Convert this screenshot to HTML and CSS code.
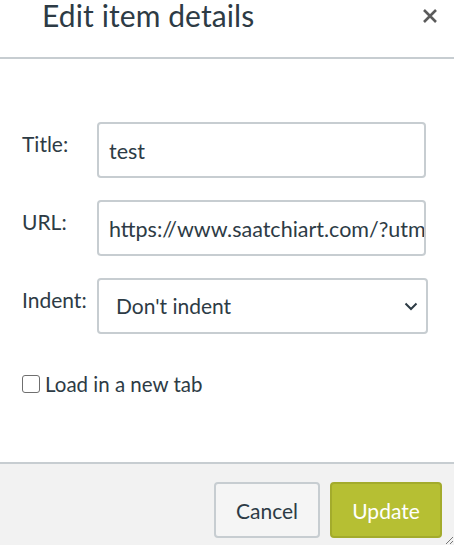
FILE: index.html
```html
<!DOCTYPE html>
<html>
<head>
<meta charset="utf-8">
<link rel="stylesheet" href="styles.css">
</head>
<body>
<div class="dialog">
  <div class="header">
    <h1 class="title">Edit item details</h1>
    <button class="close" aria-label="Close">
      <svg width="16" height="16" viewBox="0 0 16 16"><path d="M2 2 L14 14 M14 2 L2 14" stroke="#5b5b5b" stroke-width="2.6" stroke-linecap="butt"/></svg>
    </button>
  </div>
  <div class="content">
    <div class="row">
      <label class="label">Title:</label>
      <div class="field">test</div>
    </div>
    <div class="row">
      <label class="label">URL:</label>
      <div class="field">https://www.saatchiart.com/?utm</div>
    </div>
    <div class="row">
      <label class="label">Indent:</label>
      <div class="field select">
        <span>Don't indent</span>
        <svg class="chev" width="14" height="9" viewBox="0 0 14 9"><path d="M1.5 1.5 L7 7 L12.5 1.5" fill="none" stroke="#2d3b45" stroke-width="2"/></svg>
      </div>
    </div>
    <div class="check-row">
      <span class="box"></span>
      <span class="check-label">Load in a new tab</span>
    </div>
  </div>
  <div class="footer">
    <button class="btn cancel">Cancel</button>
    <button class="btn update">Update</button>
  </div>
  <svg class="grip" width="10" height="10" viewBox="0 0 10 10"><path d="M9 2 L2 9 M9 6 L6 9" stroke="#777" stroke-width="1"/></svg>
</div>
</body>
</html>
```
FILE: styles.css
```css
html, body {
  margin: 0;
  padding: 0;
  background: #fff;
}
body {
  font-family: Lato, "Open Sans", sans-serif;
  color: #2d3b45;
}
.dialog {
  position: relative;
  width: 454px;
  height: 545px;
  display: flex;
  flex-direction: column;
  overflow: hidden;
}
.header {
  height: 59px;
  border-bottom: 2px solid #c7cdd1;
  display: flex;
  align-items: flex-start;
  justify-content: space-between;
  padding-left: 42px;
  padding-right: 16px;
  box-sizing: border-box;
  flex: none;
}
.title {
  margin: 0;
  font-size: 30px;
  font-weight: 400;
  line-height: 30px;
  letter-spacing: 0.1px;
}
.close {
  border: 0;
  background: none;
  padding: 0;
  margin-top: 8px;
  width: 16px;
  height: 16px;
  display: flex;
}
.content {
  flex: 1;
  padding: 63px 28px 0 22px;
  display: flex;
  flex-direction: column;
}
.row {
  display: flex;
  align-items: flex-start;
  margin-bottom: 22px;
}
.label {
  width: 75px;
  flex: none;
  font-size: 21px;
  line-height: 24px;
  padding-top: 10px;
}
.field {
  flex: 1;
  height: 56px;
  box-sizing: border-box;
  border: 2px solid #c7cdd1;
  border-radius: 4px;
  padding: 0 10px;
  font-size: 21.5px;
  line-height: 54px;
  white-space: nowrap;
  overflow: hidden;
}
.select {
  margin-right: -2px;
  display: flex;
  align-items: center;
  justify-content: space-between;
  padding: 0 8px 0 17px;
  font-size: 21px;
}
.chev {
  flex: none;
}
.check-row {
  display: flex;
  align-items: center;
  margin-top: 16px;
}
.box {
  width: 16px;
  height: 16px;
  border: 1px solid #6f6f6f;
  border-radius: 3px;
  margin-right: 5px;
  background: #fff;
}
.check-label {
  font-size: 20.5px;
  line-height: 24px;
}
.footer {
  flex: none;
  height: 83px;
  box-sizing: border-box;
  border-top: 2px solid #c7cdd1;
  background: #f2f2f2;
  display: flex;
  justify-content: flex-end;
  align-items: flex-start;
  padding: 18px 12px 0 0;
  gap: 10px;
}
.btn {
  font-family: Lato, "Open Sans", sans-serif;
  font-size: 21px;
  height: 56px;
  border-radius: 4px;
  box-sizing: border-box;
  cursor: pointer;
  padding: 0;
}
.cancel {
  width: 106px;
  background: #f5f5f5;
  border: 2px solid #c7cdd1;
  color: #2d3b45;
}
.update {
  width: 112px;
  background: #b6bf33;
  border: 2px solid #a3ab2c;
  color: #fff;
}
.grip {
  position: absolute;
  right: 0;
  bottom: 0;
}
```
